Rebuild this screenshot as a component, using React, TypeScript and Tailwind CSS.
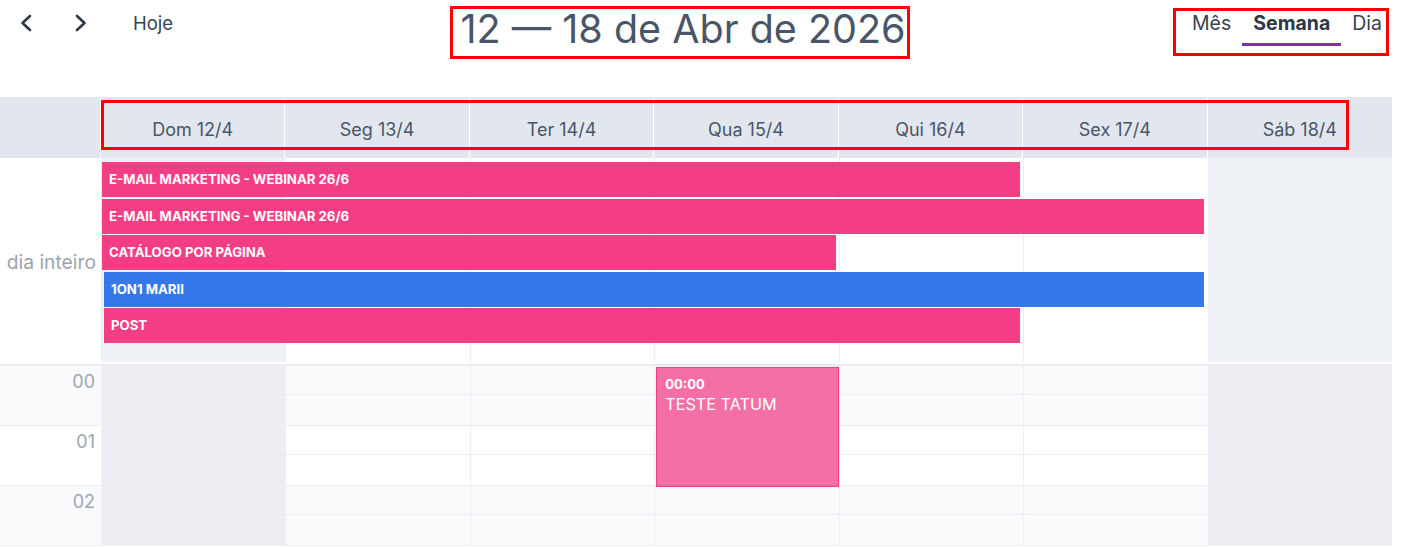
import React from 'react'

const days = ['Dom 12/4', 'Seg 13/4', 'Ter 14/4', 'Qua 15/4', 'Qui 16/4', 'Sex 17/4', 'Sáb 18/4']

interface AllDayEvent {
  title: string
  span: string
  color: string
  inset: string
}

const allDayEvents: AllDayEvent[] = [
  { title: 'E-MAIL MARKETING - WEBINAR 26/6', span: 'col-span-5', color: 'bg-[#f33e86]', inset: 'ml-px mr-[3px]' },
  { title: 'E-MAIL MARKETING - WEBINAR 26/6', span: 'col-span-6', color: 'bg-[#f33e86]', inset: 'ml-px mr-[4px]' },
  { title: 'CATÁLOGO POR PÁGINA', span: 'col-span-4', color: 'bg-[#f33e86]', inset: 'ml-px mr-[3px]' },
  { title: '1ON1 MARII', span: 'col-span-6', color: 'bg-[#3578e9]', inset: 'ml-[3px] mr-[4px]' },
  { title: 'POST', span: 'col-span-5', color: 'bg-[#f33e86]', inset: 'ml-[3px] mr-[3px]' },
]

const hours = ['00', '01', '02']

function Chevron({ dir }: { dir: 'left' | 'right' }) {
  return (
    <svg width="14" height="18" viewBox="0 0 14 18" fill="none">
      <polyline
        points={dir === 'left' ? '11,2 3.5,9 11,16' : '3,2 10.5,9 3,16'}
        stroke="#2d3748"
        strokeWidth="2.6"
        strokeLinecap="round"
        strokeLinejoin="round"
      />
    </svg>
  )
}

export default function App() {
  return (
    <div className="w-[1404px] h-[548px] overflow-hidden bg-white font-['Inter','Liberation_Sans',sans-serif] text-[#374151]">
      {/* barra superior */}
      <div className="flex h-[97px] items-start">
        <div className="flex w-[450px] items-center pt-[13px]">
          <button className="ml-[19px] flex h-[18px] w-[14px] items-center">
            <Chevron dir="left" />
          </button>
          <button className="ml-[41px] flex h-[18px] w-[14px] items-center">
            <Chevron dir="right" />
          </button>
          <span className="ml-[45px] text-[18.5px] leading-[20px] text-[#374151]">Hoje</span>
        </div>
        <div className="mt-[6px] flex h-[53px] w-[460px] items-start justify-center border-[3px] border-[#ff0000] pl-[6px] pt-[-1px]">
          <h1 className="-mt-[2px] text-[39.5px] leading-[44px] text-[#4a5568]">12 — 18 de Abr de 2026</h1>
        </div>
        <div className="flex-1" />
        <div className="mr-[15px] mt-[8px] flex h-[48px] w-[216px] border-[3px] border-[#ff0000] pl-[5px]">
          <div className="flex flex-col px-[11px]">
            <span className="text-[19.5px] leading-[24px] text-[#374151]">Mês</span>
          </div>
          <div className="flex flex-col px-[11px]">
            <span className="text-[19.5px] font-bold leading-[24px] text-[#2d3748]">Semana</span>
            <div className="mx-[-11px] mt-[8px] h-[3px] bg-[#7b2fbf]" />
          </div>
          <div className="flex flex-col px-[11px]">
            <span className="text-[19.5px] leading-[24px] text-[#374151]">Dia</span>
          </div>
        </div>
      </div>

      {/* calendário */}
      <div className="relative w-[1392px]">
        {/* cabeçalho dos dias */}
        <div className="grid h-[61px] grid-cols-[101px_repeat(7,minmax(0,1fr))] bg-[#e2e6ee]">
          <div className="border-r border-white" />
          {days.map((d, i) => (
            <div
              key={d}
              className={`flex items-center justify-center pt-[3px] text-[18px] text-[#4a5568] ${i < 6 ? 'border-r border-white' : ''}`}
            >
              {d}
            </div>
          ))}
        </div>
        <div className="pointer-events-none absolute left-[101px] top-[3px] h-[50px] w-[1248px] border-[3px] border-[#ff0000]" />

        {/* dia inteiro */}
        <div className="grid h-[205px] grid-cols-[101px_minmax(0,1fr)] border-b border-white">
          <div className="flex items-center justify-end pr-[5px] pt-[4px] text-[19.3px] text-[#9ca3af]">dia inteiro</div>
          <div className="relative">
            <div className="absolute inset-0 grid grid-cols-7">
              {days.map((d, i) => (
                <div
                  key={d}
                  className={`border-l border-[#eceef2] ${i === 0 || i === 6 ? 'bg-[#eef1f6]' : 'bg-white'}`}
                />
              ))}
            </div>
            <div className="relative grid grid-cols-7 gap-y-[1.5px] pt-[4px]">
              {allDayEvents.map((ev, i) => (
                <div
                  key={i}
                  className={`col-start-1 ${ev.span} ${ev.color} ${ev.inset} flex h-[35px] items-center pl-[7px] pt-px text-[13.2px] font-bold text-white`}
                >
                  {ev.title}
                </div>
              ))}
            </div>
          </div>
        </div>
        <div className="h-[3px] border-t border-white bg-[#e9ebef]" />

        {/* grade de horas */}
        {hours.map((h, hi) => (
          <div
            key={h}
            className={`grid h-[60px] grid-cols-[101px_repeat(7,minmax(0,1fr))] border-b border-[#eceef2] ${hi % 2 === 0 ? 'bg-[#f9fafc]' : 'bg-white'}`}
          >
            <div className="flex justify-end pr-[6px] pt-[5px] text-[18px] leading-[22px] text-[#a0a6b1]">{h}</div>
            {days.map((d, i) => (
              <div
                key={d}
                className={`relative border-l border-[#eef0f3] ${i === 0 || i === 6 ? 'bg-[#eceef3]' : ''}`}
              >
                <div className="h-[29px] border-b border-dotted border-[#e3e6eb]" />
                {hi === 0 && i === 3 && (
                  <div className="absolute left-[1px] right-0 top-[1px] z-10 h-[120px] border border-[#ef3f86] bg-[#f46fa6] px-[8px] pt-[8px] text-white">
                    <div className="text-[13px] font-bold leading-[16px]">00:00</div>
                    <div className="mt-[1px] text-[16.2px] leading-[22px]">TESTE TATUM</div>
                  </div>
                )}
              </div>
            ))}
          </div>
        ))}
      </div>
    </div>
  )
}
